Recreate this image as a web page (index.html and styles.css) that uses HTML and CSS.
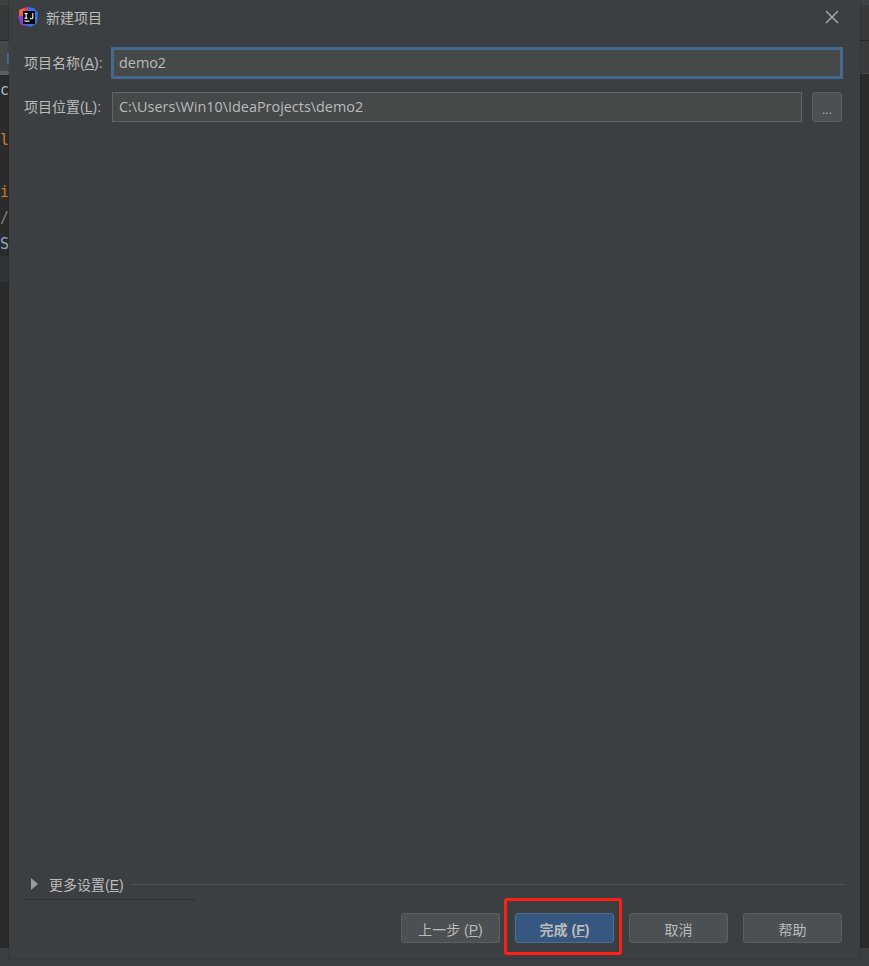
FILE: index.html
```html
<!DOCTYPE html>
<html lang="zh-CN">
<head>
<meta charset="utf-8">
<title>新建项目</title>
<link rel="stylesheet" href="styles.css">
</head>
<body>
<div class="backdrop">
  <div class="bd-left">
    <div class="bd-top"></div>
    <div class="bd-tab"><span class="bd-mark"></span></div>
    <div class="bd-code">
      <span class="cl cl-c">c</span>
      <span class="cl cl-l">l</span>
      <span class="cl cl-i">i</span>
      <span class="cl cl-s">/</span>
      <span class="cl cl-b">S</span>
    </div>
    <div class="bd-band"></div>
    <div class="bd-rest"></div>
  </div>
  <div class="bd-mid"></div>
  <div class="bd-right">
    <div class="bd-top"></div>
    <div class="bd-tab-r"></div>
    <div class="bd-rest"></div>
  </div>
</div>

<main class="dialog">
  <header class="titlebar">
    <svg class="logo" width="20" height="20" viewBox="0 0 20 20">
      <path d="M1 3 L9 0 L13 3 L7 17 L2 14 Z" fill="#f0315f"/>
      <path d="M0 9 L6 7 L9 19 L3 18 Z" fill="#8b3fd0"/>
      <path d="M10 0 L16 1 L20 6 L19 16 L13 20 L8 18 Z" fill="#2f74e8"/>
      <path d="M1 3 L6 1 L8 4 L5 9 L1 9 Z" fill="#f68a1e" opacity=".55"/>
      <rect x="5" y="4" width="12" height="13" fill="#000"/>
      <rect x="6.5" y="13.5" width="5" height="1.2" fill="#fff"/>
      <rect x="6.5" y="6" width="3.2" height="1.1" fill="#fff"/>
      <rect x="7.6" y="6" width="1.1" height="5.6" fill="#fff"/>
      <rect x="6.5" y="10.6" width="3.2" height="1.1" fill="#fff"/>
      <path d="M14.8 6v4.4a1.2 1.2 0 0 1-2.5.3" fill="none" stroke="#fff" stroke-width="1.1"/>
    </svg>
    <span class="title">新建项目</span>
    <svg class="close" width="14" height="14" viewBox="0 0 14 14">
      <path d="M1 1 L13 13 M13 1 L1 13" stroke="#b4b6b7" stroke-width="1.2" fill="none"/>
    </svg>
  </header>

  <section class="form">
    <div class="row">
      <label class="label">项目名称(<u>A</u>):</label>
      <div class="input focused">demo2</div>
    </div>
    <div class="row">
      <label class="label">项目位置(<u>L</u>):</label>
      <div class="input">C:\Users\Win10\IdeaProjects\demo2</div>
      <button class="browse">...</button>
    </div>
  </section>

  <section class="more">
    <div class="more-head">
      <span class="caret"></span>
      <span class="more-label">更多设置(<u>E</u>)</span>
      <span class="more-line"></span>
    </div>
    <div class="more-under"></div>
  </section>

  <footer class="buttons">
    <button class="btn">上一步 (<u>P</u>)</button>
    <button class="btn primary">完成 (<u>F</u>)<span class="callout"></span></button>
    <button class="btn">取消</button>
    <button class="btn">帮助</button>
  </footer>
</main>
</body>
</html>
```

FILE: styles.css
```css
* { box-sizing: border-box; }
html, body { margin: 0; height: 100%; overflow: hidden; }
body {
  position: relative;
  width: 869px;
  height: 966px;
  background: #3c3f41;
  font-family: "Liberation Sans", "Noto Sans CJK SC", sans-serif;
  font-size: 14px;
  color: #bbbbbb;
}

.backdrop { position: absolute; left: 0; right: 0; top: 0; bottom: 18px; display: flex; }
.bd-left { width: 9px; display: flex; flex-direction: column; background: #2b2b2b; }
.bd-mid { flex: 1; background: #3c3f41; }
.bd-right { width: 9px; display: flex; flex-direction: column; background: #2b2b2b; }
.bd-top { height: 41px; background: #38393b; border-top: 5px solid #3f4244; border-bottom: 1px solid #2a2a2a; }
.bd-tab { position: relative; height: 34px; background: #45484a; border-bottom: 4px solid #5c5f61; }
.bd-mark { position: absolute; right: 0; top: 12px; width: 2px; height: 11px; background: #4a6f91; }
.bd-tab-r { height: 33px; background: #3a3b3c; border-bottom: 1px solid #444648; }
.bd-code { height: 181px; position: relative; font-family: "DejaVu Sans Mono", monospace; font-size: 15px; overflow: hidden; }
.cl { position: absolute; left: 0; line-height: 18px; }
.cl-c { top: 6px; color: #a9b7c6; }
.cl-l { top: 56px; color: #cc7832; }
.cl-i { top: 108px; color: #cc7832; }
.cl-s { top: 134px; color: #808080; }
.cl-b { top: 160px; color: #8fa8c4; }
.bd-band { height: 26px; background: #313335; }
.bd-rest { flex: 1; background: #2b2b2b; }

.dialog {
  position: absolute;
  left: 9px;
  top: 0;
  width: 851px;
  height: 958px;
  display: flex;
  flex-direction: column;
  background: #3c3f41;
  box-shadow: 0 0 2px rgba(0, 0, 0, .35);
}

.titlebar { height: 36px; display: flex; align-items: center; padding: 0 21px 2px 9px; flex: none; }
.logo { flex: none; }
.title { margin-left: 8px; font-size: 14px; color: #bbbbbb; }
.close { margin-left: auto; }

.form { padding: 12px 18px 0 15px; display: flex; flex-direction: column; gap: 14px; flex: none; }
.row { display: flex; align-items: center; height: 30px; }
.label { width: 88px; flex: none; padding-bottom: 2px; font-size: 14px; color: #bbbbbb; }
.input {
  flex: 1;
  height: 30px;
  padding: 0 6px 2px;
  display: flex;
  align-items: center;
  background: #45494a;
  border: 1px solid #646464;
  font-family: "Open Sans", "Liberation Sans", sans-serif;
  font-size: 14.4px;
  color: #bbbbbb;
}
.input.focused { border: 2px solid #46688f; box-shadow: 0 0 0 1px #46688f; padding: 0 5px 2px; }
.browse {
  margin-left: 10px;
  width: 30px;
  height: 30px;
  flex: none;
  padding: 6px 0 0;
  background: #4c5052;
  border: 1px solid #5e6060;
  border-radius: 3px;
  color: #bbbbbb;
  font: 12px "Liberation Sans", sans-serif;
}

.more { margin-top: auto; flex: none; padding: 0 15px; }
.more-head { display: flex; align-items: center; height: 20px; }
.caret {
  width: 0; height: 0; margin-left: 7px;
  border-left: 7px solid #9a9c9e;
  border-top: 6px solid transparent;
  border-bottom: 6px solid transparent;
}
.more-label { margin-left: 11px; font-size: 14px; color: #bbbbbb; }
.more-line { flex: 1; height: 1px; margin-left: 6px; margin-right: -1px; background: #515151; }
.more-under { width: 172px; height: 1px; margin-top: 5px; background: #323232; }

.buttons {
  display: flex;
  justify-content: flex-end;
  gap: 15px;
  padding: 13px 18px 15px 0;
  flex: none;
}
.btn {
  position: relative;
  width: 99px;
  height: 30px;
  padding: 2px 0 0;
  background: #4c5052;
  border: 1px solid #5e6060;
  border-radius: 3px;
  color: #bbbbbb;
  font: 14px "Liberation Sans", "Noto Sans CJK SC", sans-serif;
}
.btn.primary {
  background: #365880;
  border-color: #4c708c;
  font-weight: 700;
}
.callout {
  position: absolute;
  left: -12px; top: -16px;
  width: 118px; height: 57px;
  border: 3px solid #ff2015;
  border-radius: 3px;
  pointer-events: none;
}
```
